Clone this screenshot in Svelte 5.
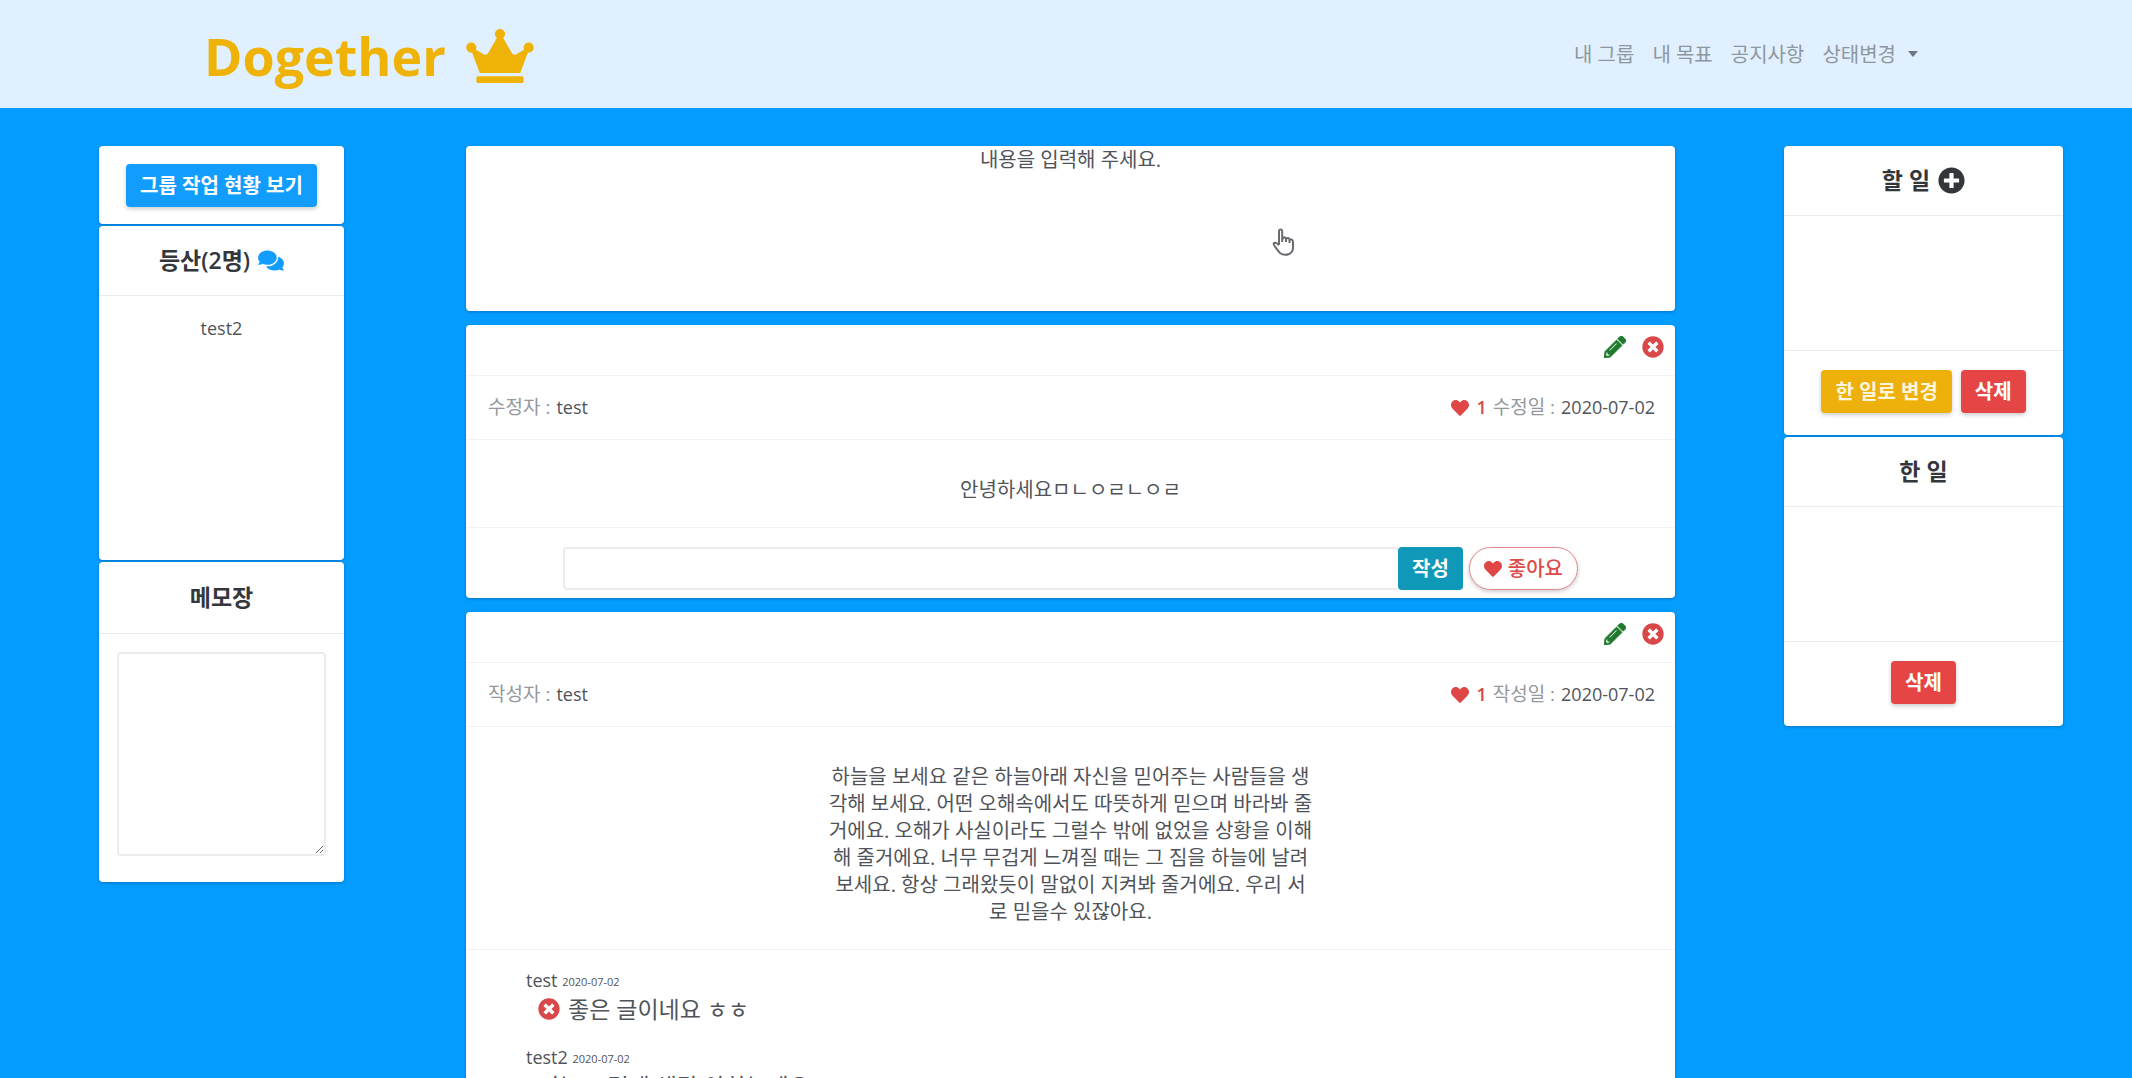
<script>
  const navItems = ['내 그룹', '내 목표', '공지사항'];

  const posts = [
    {
      id: 1,
      role: '수정자',
      author: 'test',
      dateLabel: '수정일',
      date: '2020-07-02',
      likes: 1,
      body: '안녕하세요ㅁㄴㅇㄹㄴㅇㄹ',
      comments: []
    },
    {
      id: 2,
      role: '작성자',
      author: 'test',
      dateLabel: '작성일',
      date: '2020-07-02',
      likes: 1,
      body:
        '하늘을 보세요 같은 하늘아래 자신을 믿어주는 사람들을 생\n' +
        '각해 보세요. 어떤 오해속에서도 따뜻하게 믿으며 바라봐 줄\n' +
        '거에요. 오해가 사실이라도 그럴수 밖에 없었을 상황을 이해\n' +
        '해 줄거에요. 너무 무겁게 느껴질 때는 그 짐을 하늘에 날려\n' +
        '보세요. 항상 그래왔듯이 말없이 지켜봐 줄거에요. 우리 서\n' +
        '로 믿을수 있잖아요.',
      comments: [
        { author: 'test', date: '2020-07-02', text: '좋은 글이네요 ㅎㅎ', mine: true },
        { author: 'test2', date: '2020-07-02', text: '저는 그렇게 생각 안하는데요?', mine: false }
      ]
    }
  ];
</script>

{#snippet heart()}
  <svg class="heart" viewBox="0 0 512 512" aria-hidden="true"><path d="M462.3 62.6C407.5 15.9 326 24.3 275.7 76.2L256 96.5l-19.7-20.3C186.1 24.3 104.5 15.9 49.7 62.6c-62.8 53.6-66.1 149.8-9.9 207.9l193.5 199.8c12.5 12.9 32.8 12.9 45.3 0l193.5-199.8c56.3-58.1 53-154.3-9.8-207.9z" /></svg>
{/snippet}

{#snippet cross()}
  <svg class="cross" viewBox="0 0 512 512" aria-hidden="true"><path d="M256 8C119 8 8 119 8 256s111 248 248 248 248-111 248-248S393 8 256 8zm121.600 313.100c4.700 4.700 4.700 12.300 0 17L338 377.600c-4.700 4.700-12.300 4.700-17 0L256 312l-65.100 65.600c-4.700 4.700-12.300 4.700-17 0L134.400 338c-4.700-4.700-4.700-12.300 0-17l65.600-65-65.600-65.100c-4.700-4.700-4.700-12.300 0-17l39.600-39.600c4.700-4.700 12.300-4.700 17 0l65 65.700 65.100-65.600c4.700-4.700 12.300-4.700 17 0l39.600 39.600c4.700 4.700 4.700 12.300 0 17L312 256l65.600 65.100z" /></svg>
{/snippet}

<div class="page">
  <header class="topbar">
    <a class="brand" href="#home">
      <span>Dogether</span>
      <svg class="crown" viewBox="0 0 640 512" aria-hidden="true"><path d="M528 448H112c-8.800 0-16 7.200-16 16v32c0 8.800 7.200 16 16 16h416c8.800 0 16-7.200 16-16v-32c0-8.800-7.200-16-16-16zm64-320c-26.500 0-48 21.500-48 48 0 7.100 1.600 13.700 4.400 19.800L476 239.200c-15.400 9.200-35.300 4-44.200-11.600L350.300 85C361 76.200 368 63 368 48c0-26.500-21.500-48-48-48s-48 21.500-48 48c0 15 7 28.200 17.700 37l-81.500 142.600c-8.900 15.600-28.900 20.800-44.200 11.600l-72.300-43.400c2.700-6 4.400-12.700 4.400-19.800 0-26.500-21.500-48-48-48S0 149.500 0 176s21.500 48 48 48c2.600 0 5.200-.4 7.700-.8L128 416h384l72.300-192.800c2.500.4 5.100.8 7.700.8 26.500 0 48-21.500 48-48s-21.500-48-48-48z" /></svg>
    </a>
    <nav>
      {#each navItems as item}
        <a href="#menu">{item}</a>
      {/each}
      <button class="dropdown" type="button">상태변경<span class="caret"></span></button>
    </nav>
  </header>

  <main class="columns">
    <aside class="left stack">
      <section class="card status">
        <button class="btn blue" type="button">그룹 작업 현황 보기</button>
      </section>
      <section class="card members">
        <h2>
          등산(2명)
          <svg class="chat" viewBox="0 0 576 512" aria-hidden="true"><path d="M416 192c0-88.400-93.100-160-208-160S0 103.600 0 192c0 34.300 14.100 65.900 38 92-13.400 30.200-35.500 54.200-35.800 54.500-2.200 2.300-2.800 5.700-1.500 8.700S4.800 352 8 352c36.600 0 66.900-12.300 88.700-25 32.200 15.700 70.300 25 111.300 25 114.900 0 208-71.600 208-160zm122 220c23.900-26 38-57.700 38-92 0-66.900-53.500-124.200-129.300-148.100.9 6.600 1.300 13.300 1.300 20.100 0 105.900-107.700 192-240 192-10.800 0-21.300-.8-31.700-1.900C207.800 439.600 281.800 480 368 480c41 0 79.100-9.200 111.300-25 21.800 12.700 52.100 25 88.700 25 3.200 0 6.100-1.900 7.300-4.800 1.300-2.900.7-6.300-1.500-8.700-.3-.3-22.400-24.200-35.800-54.500z" /></svg>
        </h2>
        <p>test2</p>
      </section>
      <section class="card memo">
        <h2><label for="memo">메모장</label></h2>
        <div class="memo-body"><textarea id="memo"></textarea></div>
      </section>
    </aside>

    <div class="feed">
      <section class="card composer">
        내용을 입력해 주세요.
        <svg class="hand" viewBox="0 0 22 28" aria-hidden="true"><path d="M7 17V3.500Q7 1.500 8.600 1.500T10.200 3.500V11L12 9.500Q13 9 14 10.500L16 10Q17 10 17.500 11.500L19.500 11.500Q21 12 21 14V20Q21 24 17 26Q12 28 8 25Q5 22 3 18.500Q1 16 2 15Q4 14 7 17M10.200 11V14M14 11V14M17.500 12V15" /></svg>
      </section>

      {#each posts as post (post.id)}
        <article class="card">
          <div class="tools">
            <button type="button" class="icon-btn" aria-label="수정">
              <svg class="pencil" viewBox="0 0 512 512" aria-hidden="true"><path d="M497.900 142.100l-46.100 46.100c-4.700 4.700-12.300 4.700-17 0l-111-111c-4.700-4.700-4.700-12.300 0-17l46.100-46.100c18.700-18.700 49.100-18.700 67.900 0l60.100 60.100c18.800 18.700 18.800 49.100 0 67.900zM284.200 99.800L21.600 362.400.4 483.900c-2.900 16.400 11.400 30.600 27.800 27.800l121.500-21.300 262.600-262.600c4.700-4.700 4.700-12.300 0-17l-111-111c-4.800-4.700-12.400-4.700-17.100 0zM124.100 339.900c-5.500-5.500-5.500-14.300 0-19.800l154-154c5.500-5.500 14.300-5.500 19.800 0s5.500 14.300 0 19.800l-154 154c-5.500 5.500-14.300 5.500-19.800 0zM88 424h48v36.300l-64.500 11.300-31.100-31.100L51.700 376H88v48z" /></svg>
            </button>
            <button type="button" class="icon-btn" aria-label="삭제">{@render cross()}</button>
          </div>
          <div class="meta">
            <div class="pair"><span class="muted">{post.role} :</span> <span>{post.author}</span></div>
            <div class="pair">
              <span class="likes">{@render heart()} {post.likes}</span>
              <span class="muted">{post.dateLabel} :</span>
              <span>{post.date}</span>
            </div>
          </div>
          <p class="body">{post.body}</p>
          {#if post.comments.length}
            <ul class="comments">
              {#each post.comments as comment}
                <li>
                  <div class="who">{comment.author} <time>{comment.date}</time></div>
                  <div class="said">
                    {#if comment.mine}
                      <button type="button" class="icon-btn" aria-label="댓글 삭제">{@render cross()}</button>
                    {/if}
                    {comment.text}
                  </div>
                </li>
              {/each}
            </ul>
          {:else}
            <form class="reply">
              <input type="text" aria-label="댓글" />
              <button class="btn teal" type="button">작성</button>
              <button class="btn pill" type="button">{@render heart()} 좋아요</button>
            </form>
          {/if}
        </article>
      {/each}
    </div>

    <aside class="right stack">
      <section class="card tasks">
        <h2>
          할 일<button type="button" class="icon-btn" aria-label="할 일 추가">
            <svg class="plus" viewBox="0 0 512 512" aria-hidden="true"><path d="M256 8C119 8 8 119 8 256s111 248 248 248 248-111 248-248S393 8 256 8zm144 276c0 6.600-5.400 12-12 12h-92v92c0 6.600-5.400 12-12 12h-56c-6.600 0-12-5.400-12-12v-92h-92c-6.600 0-12-5.400-12-12v-56c0-6.600 5.400-12 12-12h92v-92c0-6.600 5.400-12 12-12h56c6.600 0 12 5.400 12 12v92h92c6.600 0 12 5.400 12 12v56z" /></svg>
          </button>
        </h2>
        <div class="list"></div>
        <div class="actions">
          <button class="btn yellow" type="button">한 일로 변경</button>
          <button class="btn red" type="button">삭제</button>
        </div>
      </section>
      <section class="card tasks">
        <h2>한 일</h2>
        <div class="list"></div>
        <div class="actions">
          <button class="btn red" type="button">삭제</button>
        </div>
      </section>
    </aside>
  </main>
</div>

<style>
  :global(body) {
    background: #049dff;
  }

  .page {
    height: 100vh;
    overflow-y: auto;
    scrollbar-width: none;
    background: #049dff;
    color: #50545a;
    font-family: 'Open Sans', 'Noto Sans CJK KR', sans-serif;
    font-size: 18px;
    line-height: 27px;
  }

  .page * {
    box-sizing: border-box;
  }

  button {
    font: inherit;
    cursor: pointer;
  }

  svg {
    fill: currentColor;
  }

  .topbar {
    display: flex;
    align-items: center;
    justify-content: space-between;
    height: 108px;
    padding: 0 214px 0 204px;
    background: #e1f0fe;
  }

  .brand {
    display: flex;
    align-items: center;
    gap: 20px;
    padding-top: 4px;
    color: #efb308;
    font-size: 52px;
    font-weight: 700;
    line-height: 72px;
    text-decoration: none;
  }

  .crown {
    width: 68px;
    height: 54px;
  }

  nav {
    display: flex;
    align-items: center;
    gap: 18px;
  }

  nav a,
  .dropdown {
    color: #8d979f;
    font-size: 20px;
    text-decoration: none;
  }

  .dropdown {
    display: flex;
    align-items: center;
    gap: 12px;
    padding: 0;
    border: 0;
    background: none;
  }

  .caret {
    border: 5px solid transparent;
    border-top: 6px solid #6d777f;
    border-bottom: 0;
  }

  .columns {
    display: grid;
    grid-template-columns: 99fr 245fr 122fr 1209fr 109fr 279fr 69fr;
    align-items: start;
    padding: 38px 0 0;
  }

  .left {
    grid-column: 2;
  }

  .feed {
    grid-column: 4;
    display: flex;
    flex-direction: column;
    gap: 14px;
  }

  .right {
    grid-column: 6;
  }

  .stack {
    display: flex;
    flex-direction: column;
    gap: 2px;
  }

  .card {
    border-radius: 4px;
    background: #fff;
    box-shadow: 0 1px 3px rgb(0 40 90 / 35%);
  }

  h2 {
    display: flex;
    align-items: center;
    justify-content: center;
    gap: 8px;
    height: 70px;
    margin: 0;
    border-bottom: 1px solid #e9ebec;
    color: #33373c;
    font-size: 23px;
    font-weight: 600;
  }

  .btn {
    height: 43px;
    padding: 0 14px;
    border: 0;
    border-radius: 4px;
    color: #fff;
    font-size: 20px;
    font-weight: 700;
    box-shadow: 0 2px 4px rgb(0 0 0 / 20%);
    white-space: nowrap;
  }

  .blue {
    background: #129dfd;
  }

  .yellow {
    background: #eeb10b;
    color: #fff6dc;
  }

  .red {
    background: #e54545;
  }

  .teal {
    background: #1098b8;
    box-shadow: none;
  }

  .pill {
    display: flex;
    align-items: center;
    gap: 6px;
    margin-left: 6px;
    border: 1px solid #e08a8a;
    border-radius: 22px;
    background: #fff;
    color: #df4a4a;
    font-weight: 500;
  }

  .status {
    display: flex;
    justify-content: center;
    padding: 18px 0 17px;
  }

  .members {
    height: 334px;
    text-align: center;
  }

  .members p {
    margin: 19px 0 0;
  }

  .chat {
    width: 26px;
    height: 23px;
    color: #129dfd;
  }

  .memo h2 {
    height: 72px;
  }

  .memo-body {
    padding: 18px 18px 26px;
  }

  textarea {
    display: block;
    width: 100%;
    height: 204px;
    border: 2px solid #ececec;
    border-radius: 4px;
    font: inherit;
    resize: vertical;
  }

  .composer {
    position: relative;
    height: 165px;
    text-align: center;
    font-size: 20px;
  }

  .hand {
    position: absolute;
    top: 82px;
    right: 381px;
    width: 22px;
    height: 28px;
    fill: #fff;
    stroke: #6a6a70;
    stroke-width: 2;
  }

  .icon-btn {
    display: flex;
    padding: 0;
    border: 0;
    background: none;
    color: inherit;
  }

  .tools {
    display: flex;
    align-items: center;
    justify-content: flex-end;
    gap: 16px;
    height: 51px;
    padding: 0 11px 6px;
    border-bottom: 1px solid #f1f2f3;
  }

  .pencil {
    width: 22px;
    height: 22px;
    color: #1f7a2e;
    stroke: currentColor;
    stroke-width: 16;
  }

  .cross {
    width: 22px;
    height: 22px;
    color: #d94848;
  }

  .meta {
    display: flex;
    align-items: center;
    justify-content: space-between;
    height: 64px;
    padding: 0 20px 0 22px;
    border-bottom: 1px solid #f1f2f3;
  }

  .pair {
    display: flex;
    align-items: center;
    gap: 6px;
  }

  .muted {
    color: #94989c;
    font-size: 19px;
  }

  .likes {
    display: flex;
    align-items: center;
    gap: 7px;
    color: #d94848;
    font-weight: 600;
  }

  .heart {
    width: 18px;
    height: 18px;
    color: #df4747;
  }

  .body {
    margin: 0;
    padding: 36px 0 24px;
    border-bottom: 1px solid #f1f2f3;
    font-size: 20px;
    text-align: center;
    white-space: pre-line;
  }

  .reply {
    display: flex;
    padding: 19px 97px 8px;
  }

  .reply input {
    flex: 1;
    min-width: 0;
    height: 43px;
    border: 2px solid #ececec;
    border-right: 0;
    border-radius: 4px 0 0 4px;
    font: inherit;
  }

  .comments {
    margin: 0;
    padding: 17px 60px;
    list-style: none;
  }

  .comments li {
    margin-bottom: 21px;
  }

  time {
    font-size: 11px;
    vertical-align: 1px;
  }

  .said {
    display: flex;
    align-items: center;
    gap: 8px;
    height: 28px;
    padding-left: 12px;
    font-size: 23px;
  }

  .plus {
    width: 27px;
    height: 27px;
  }

  .list {
    height: 135px;
    border-bottom: 1px solid #e9ebec;
  }

  .actions {
    display: flex;
    justify-content: center;
    gap: 9px;
    padding: 19px 0 22px;
  }
</style>
